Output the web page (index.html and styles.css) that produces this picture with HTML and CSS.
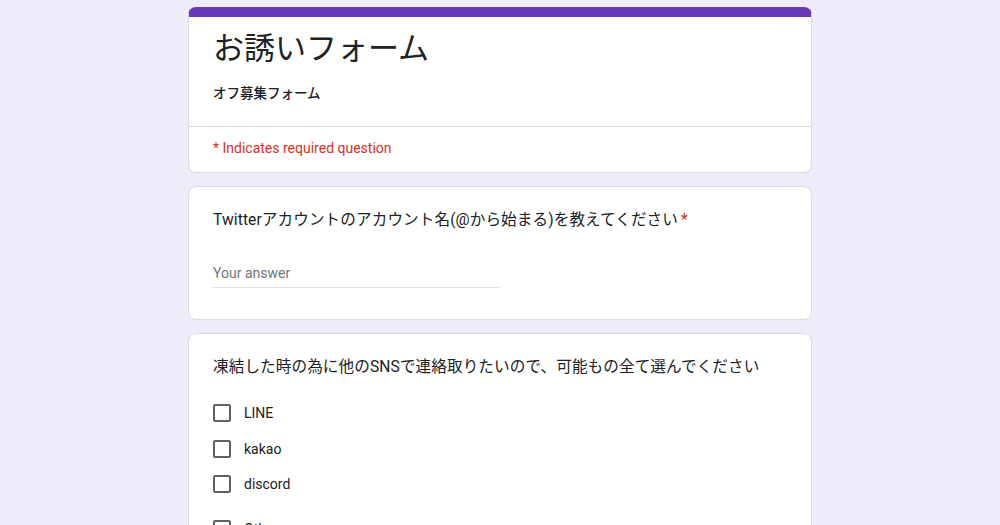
FILE: index.html
```html
<!DOCTYPE html>
<html lang="ja">
<head>
    <meta charset="UTF-8">
    <title>お誘いフォーム</title>
    <link rel="stylesheet" href="styles.css">
</head>
<body>
    <main class="form">
        <div class="card head">
            <div class="head-top">
                <h1>お誘いフォーム</h1>
                <div class="desc">オフ募集フォーム</div>
            </div>
            <div class="required-note">* Indicates required question</div>
        </div>

        <div class="card question">
            <div class="q-title">Twitterアカウントのアカウント名(@から始まる)を教えてください<span class="star">*</span></div>
            <div class="answer">Your answer</div>
        </div>

        <div class="card question">
            <div class="q-title">凍結した時の為に他のSNSで連絡取りたいので、可能もの全て選んでください</div>
            <div class="options">
                <label class="option"><span class="box"></span>LINE</label>
                <label class="option"><span class="box"></span>kakao</label>
                <label class="option"><span class="box"></span>discord</label>
                <label class="option other"><span class="box"></span>Other:</label>
            </div>
        </div>
    </main>
</body>
</html>
```

FILE: styles.css
```css
body {
    margin: 0;
    padding: 7px 0 0;
    background-color: #efebf8;
    font-family: Roboto, "Noto Sans CJK JP", sans-serif;
    color: #202124;
    overflow: hidden;
}

.form {
    width: 624px;
    margin: 0 auto;
    display: flex;
    flex-direction: column;
    gap: 13px;
}

.card {
    background: white;
    border: 1px solid #dadce0;
    border-radius: 8px;
}

.head {
    border-top: 10px solid #673ab7;
    overflow: hidden;
}

.head-top {
    padding: 12px 24px 23px;
    border-bottom: 1px solid #dadce0;
}

h1 {
    margin: 0;
    font-size: 31px;
    font-weight: 400;
    line-height: 40px;
    color: #202124;
}

.desc {
    margin-top: 14px;
    font-size: 13.5px;
    font-weight: 500;
    line-height: 20px;
}

.required-note {
    padding: 11px 24px 14px;
    font-size: 14px;
    line-height: 20px;
    color: #d93025;
}

.question {
    padding: 21px 24px 24px;
}

.q-title {
    font-size: 15.6px;
    line-height: 24px;
    letter-spacing: 0.1px;
}

.star {
    color: #d93025;
    margin-left: 3px;
}

.answer {
    width: 50%;
    margin-top: 27px;
    height: 28px;
    line-height: 28px;
    font-size: 14px;
    color: #70757a;
    border-bottom: 1px solid #e0e0e0;
    margin-bottom: 7px;
}

.options {
    margin-top: 23px;
    display: flex;
    flex-direction: column;
    gap: 13.5px;
}

.option {
    display: flex;
    align-items: center;
    gap: 13px;
    font-size: 14px;
    line-height: 22px;
}

.option.other {
    margin-top: 9px;
}

.box {
    width: 14px;
    height: 14px;
    border: 2px solid #5f6368;
    border-radius: 2px;
    flex-shrink: 0;
}
```
